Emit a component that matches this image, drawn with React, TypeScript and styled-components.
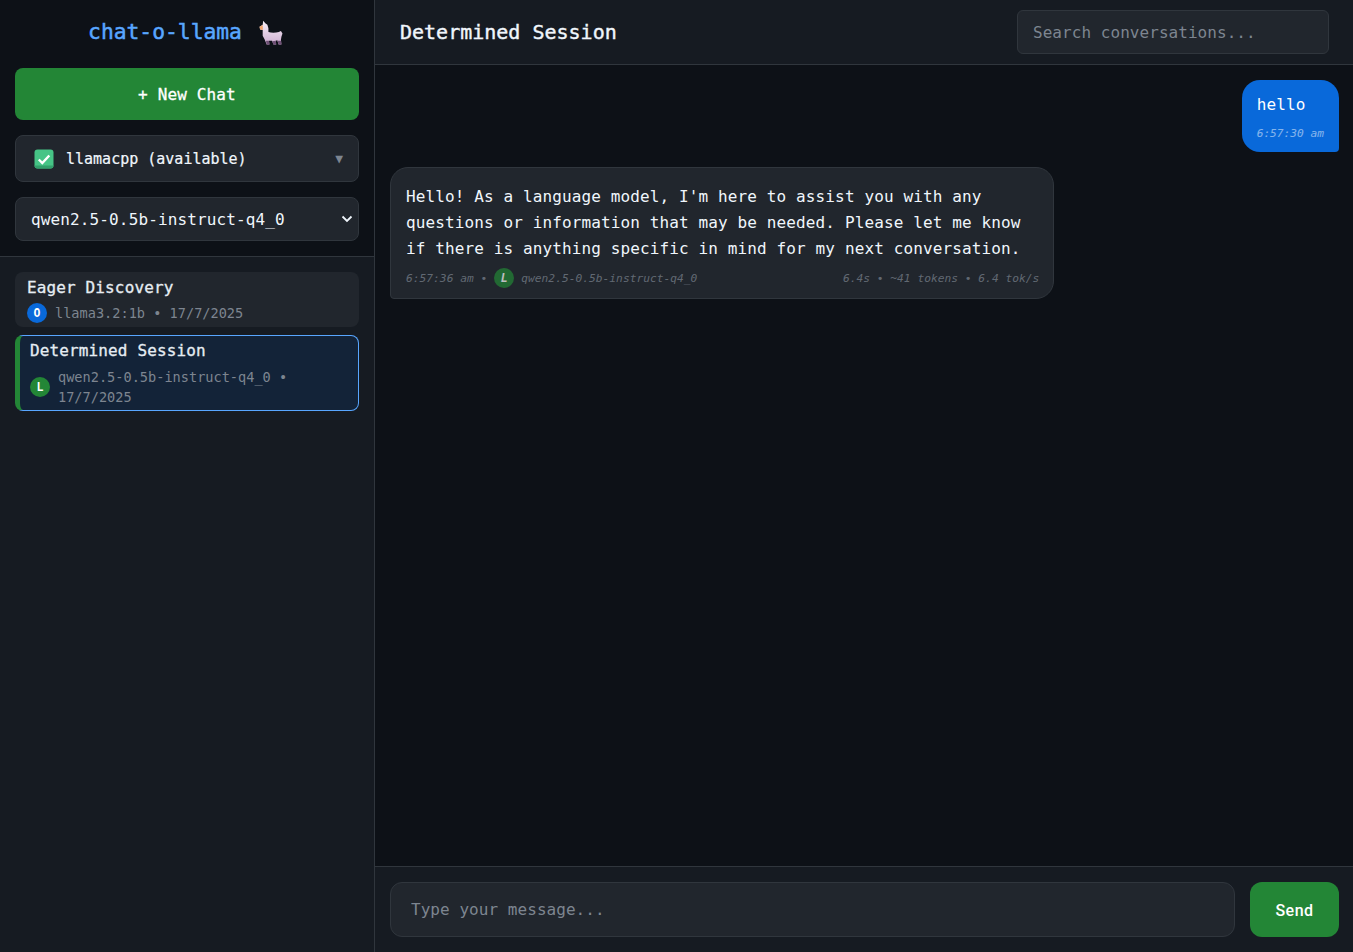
import styled, { createGlobalStyle } from "styled-components";

const mono = `"DejaVu Sans Mono", "Liberation Mono", monospace`;

const chevron = `url("data:image/svg+xml,%3Csvg xmlns='http://www.w3.org/2000/svg' width='12' height='8' viewBox='0 0 12 8'%3E%3Cpath d='M1.5 1.5 6 6l4.5-4.5' fill='none' stroke='%23f0f6fc' stroke-width='1.8'/%3E%3C/svg%3E")`;

const GlobalStyle = createGlobalStyle`
  * {
    box-sizing: border-box;
  }
  body {
    margin: 0;
    background: #0d1117;
    color: #f0f6fc;
    font-family: ${mono};
  }
`;

const LlamaIcon = () => (
  <svg width="25" height="25" viewBox="0 0 24 24" aria-hidden="true">
    <defs>
      <linearGradient id="llamaFur" x1="0" y1="0" x2="0" y2="1">
        <stop offset="0" stopColor="#f8eff8" />
        <stop offset="1" stopColor="#cdaed0" />
      </linearGradient>
    </defs>
    <path
      d="M1.500 6.500 4.500 4.500 5 .8 7 3 9 4.500 10 8v3.500c3 1 7 .8 10 0l2-1 1.500 2.500-1 3-.5 3 .5 4.500h-2.700l-1.300-4-1.500.5.500 3.500h-2.700L13.500 20h-3l.5 3.500H8.300L6.500 19l-2-4V9.500L2 9Z"
      fill="url(#llamaFur)"
    />
    <path d="M7.600 20 8.300 23.500H11L10.600 20ZM13.700 20.500 14.800 23.500h2.700L17.100 20ZM18.700 20 19.800 23.500h2.700L22.100 20Z" fill="#6f5076" />
    <path d="M1.500 6.500 4.500 4.900 4.800 9.400 2 9Z" fill="#f0a66e" />
  </svg>
);

const CheckIcon = () => (
  <svg width="20" height="20" viewBox="0 0 20 20" aria-hidden="true">
    <rect x="0.500" y="0.500" width="19" height="19" rx="3" fill="#46c486" />
    <path d="M0.500 16.500c0 1.700 1.300 3 3 3h13c1.700 0 3-1.300 3-3Z" fill="#33a06c" />
    <path d="M4.800 10.500 8.300 14l7-7.500" fill="none" stroke="#ffffff" strokeWidth="2.400" />
  </svg>
);

const App = () => {
  return (
    <Layout>
      <GlobalStyle />
      <Sidebar>
        <SidebarHeader>
          <Logo>
            <span>chat-o-llama</span>
            <LlamaIcon />
          </Logo>
          <NewChatButton>+ New Chat</NewChatButton>
          <ProviderBox>
            <CheckIcon />
            <ProviderName>llamacpp (available)</ProviderName>
            <Caret>▼</Caret>
          </ProviderBox>
          <ModelSelect defaultValue="qwen">
            <option value="qwen">qwen2.5-0.5b-instruct-q4_0</option>
          </ModelSelect>
        </SidebarHeader>
        <ChatList>
          <ChatCard>
            <ChatTitle>Eager Discovery</ChatTitle>
            <ChatMeta>
              <Badge $kind="ollama">O</Badge>
              <span>llama3.2:1b • 17/7/2025</span>
            </ChatMeta>
          </ChatCard>
          <ChatCard $active>
            <ChatTitle>Determined Session</ChatTitle>
            <ChatMeta>
              <Badge $kind="llamacpp">L</Badge>
              <span>qwen2.5-0.5b-instruct-q4_0 • 17/7/2025</span>
            </ChatMeta>
          </ChatCard>
        </ChatList>
      </Sidebar>
      <Main>
        <Header>
          <HeaderTitle>Determined Session</HeaderTitle>
          <SearchInput placeholder="Search conversations..." />
        </Header>
        <Messages>
          <UserBubble>
            <UserText>hello</UserText>
            <UserTime>6:57:30 am</UserTime>
          </UserBubble>
          <AssistantBubble>
            <AssistantText>
              Hello! As a language model, I'm here to assist you with any questions or information
              that may be needed. Please let me know if there is anything specific in mind for my
              next conversation.
            </AssistantText>
            <MetaRow>
              <MetaGroup>
                <span>6:57:36 am •</span>
                <Badge $kind="llamacpp">L</Badge>
                <span>qwen2.5-0.5b-instruct-q4_0</span>
              </MetaGroup>
              <span>6.4s • ~41 tokens • 6.4 tok/s</span>
            </MetaRow>
          </AssistantBubble>
        </Messages>
        <Composer>
          <MessageInput placeholder="Type your message..." />
          <SendButton>Send</SendButton>
        </Composer>
      </Main>
    </Layout>
  );
};

const Layout = styled.div`
  display: flex;
  height: 100vh;
  overflow: hidden;
`;

const Sidebar = styled.aside`
  width: 375px;
  flex-shrink: 0;
  display: flex;
  flex-direction: column;
  background: #161b22;
  border-right: 1px solid #30363d;
`;

const SidebarHeader = styled.div`
  display: flex;
  flex-direction: column;
  gap: 15px;
  height: 257px;
  padding: 15px;
  background: #0d1117;
  border-bottom: 1px solid #30363d;
`;

const Logo = styled.h1`
  display: flex;
  align-items: center;
  justify-content: center;
  gap: 16px;
  margin: 0 0 4px;
  padding-right: 3px;
  height: 34px;
  font-size: 21.3px;
  line-height: 34px;
  font-weight: 400;
  -webkit-text-stroke: 0.5px #58a6ff;
  color: #58a6ff;
  svg {
    margin-top: 1px;
  }
`;

const NewChatButton = styled.button`
  height: 52px;
  flex-shrink: 0;
  border: 0;
  border-radius: 8px;
  background: #238636;
  color: #ffffff;
  font-family: ${mono};
  font-size: 16px;
  font-weight: 400;
  letter-spacing: 0.15px;
  -webkit-text-stroke: 0.3px #ffffff;
`;

const ProviderBox = styled.div`
  display: flex;
  align-items: center;
  height: 47px;
  flex-shrink: 0;
  padding: 0 15px 0 18px;
  background: #21262d;
  border: 1px solid #30363d;
  border-radius: 8px;
`;

const ProviderName = styled.span`
  flex: 1;
  margin-left: 12px;
  font-size: 15px;
  color: #f0f6fc;
  -webkit-text-stroke: 0.2px #f0f6fc;
`;

const Caret = styled.span`
  font-size: 13px;
  color: #7d8590;
`;

const ModelSelect = styled.select`
  appearance: none;
  height: 44px;
  flex-shrink: 0;
  padding: 0 15px;
  background: #21262d ${chevron} no-repeat right 5px center;
  border: 1px solid #30363d;
  border-radius: 8px;
  color: #f0f6fc;
  font-family: ${mono};
  font-size: 16px;
  letter-spacing: 0.13px;
`;

const ChatList = styled.div`
  flex: 1;
  display: flex;
  flex-direction: column;
  gap: 8px;
  padding: 15px;
`;

const ChatCard = styled.div<{ $active?: boolean }>`
  display: flex;
  flex-direction: column;
  gap: ${({ $active }) => ($active ? "7px" : "6px")};
  padding: 5px 11px 3px;
  background: ${({ $active }) => ($active ? "#132338" : "#21262d")};
  border: 1px solid ${({ $active }) => ($active ? "#58a6ff" : "transparent")};
  border-radius: 8px;
  ${({ $active }) => $active && "border-left: 5px solid #238636; padding-left: 10px;"}
`;

const ChatTitle = styled.div`
  font-size: 16px;
  line-height: 19px;
  letter-spacing: 0.13px;
  color: #e6edf3;
  -webkit-text-stroke: 0.3px #e6edf3;
`;

const ChatMeta = styled.div`
  display: flex;
  align-items: center;
  gap: 8px;
  font-size: 13.6px;
  line-height: 20px;
  color: #7d8590;
`;

const Badge = styled.span<{ $kind: "ollama" | "llamacpp" }>`
  width: 20px;
  height: 20px;
  flex-shrink: 0;
  display: inline-flex;
  align-items: center;
  justify-content: center;
  border-radius: 50%;
  background: ${({ $kind }) => ($kind === "ollama" ? "#0969da" : "#238636")};
  color: #ffffff;
  font-size: 11.5px;
  font-weight: 700;
`;

const Main = styled.main`
  flex: 1;
  min-width: 0;
  display: flex;
  flex-direction: column;
`;

const Header = styled.header`
  display: flex;
  align-items: center;
  justify-content: space-between;
  height: 65px;
  flex-shrink: 0;
  padding: 0 24px 0 25px;
  background: #161b22;
  border-bottom: 1px solid #30363d;
`;

const HeaderTitle = styled.h2`
  margin: 0;
  font-size: 20px;
  font-weight: 400;
  color: #f0f6fc;
  -webkit-text-stroke: 0.4px #f0f6fc;
`;

const SearchInput = styled.input`
  width: 312px;
  height: 44px;
  padding: 0 15px;
  background: #21262d;
  border: 1px solid #30363d;
  border-radius: 6px;
  color: #f0f6fc;
  font-family: ${mono};
  font-size: 16px;
  letter-spacing: 0.05px;
  &::placeholder {
    color: #7d8590;
    opacity: 1;
  }
`;

const Messages = styled.div`
  flex: 1;
  display: flex;
  flex-direction: column;
  gap: 15px;
  padding: 15px 14px 15px 15px;
`;

const UserBubble = styled.div`
  align-self: flex-end;
  padding: 12px 15px 11px;
  background: #0969da;
  border-radius: 18px 18px 4px 18px;
`;

const UserText = styled.div`
  font-size: 16px;
  line-height: 26px;
  letter-spacing: 0.13px;
  color: #ffffff;
`;

const UserTime = styled.div`
  margin-top: 8px;
  font-size: 11.2px;
  line-height: 15px;
  font-style: italic;
  color: #ffffff;
  opacity: 0.5;
`;

const AssistantBubble = styled.div`
  align-self: flex-start;
  max-width: 70%;
  padding: 16px 14px 10px 15px;
  background: #21262d;
  border: 1px solid #30363d;
  border-radius: 18px 18px 18px 4px;
`;

const AssistantText = styled.div`
  font-size: 16px;
  line-height: 26px;
  letter-spacing: 0.12px;
  color: #f0f6fc;
`;

const MetaRow = styled.div`
  display: flex;
  align-items: center;
  justify-content: space-between;
  margin-top: 6px;
  font-size: 11.25px;
  font-style: italic;
  color: #7d8590;
  opacity: 0.7;
`;

const MetaGroup = styled.div`
  display: flex;
  align-items: center;
  gap: 7px;
`;

const Composer = styled.div`
  display: flex;
  gap: 15px;
  height: 86px;
  flex-shrink: 0;
  padding: 15px 14px 15px 15px;
  background: #161b22;
  border-top: 1px solid #30363d;
`;

const MessageInput = styled.input`
  flex: 1;
  min-width: 0;
  padding: 0 20px;
  background: #21262d;
  border: 1px solid #30363d;
  border-radius: 12px;
  color: #f0f6fc;
  font-family: ${mono};
  font-size: 16px;
  letter-spacing: 0.05px;
  &::placeholder {
    color: #7d8590;
    opacity: 1;
  }
`;

const SendButton = styled.button`
  width: 89px;
  flex-shrink: 0;
  padding: 2px 0 0;
  border: 0;
  border-radius: 12px;
  background: #238636;
  color: #ffffff;
  font-family: Roboto, sans-serif;
  font-size: 16px;
  font-weight: 500;
  letter-spacing: 0.5px;
`;

export default App;
